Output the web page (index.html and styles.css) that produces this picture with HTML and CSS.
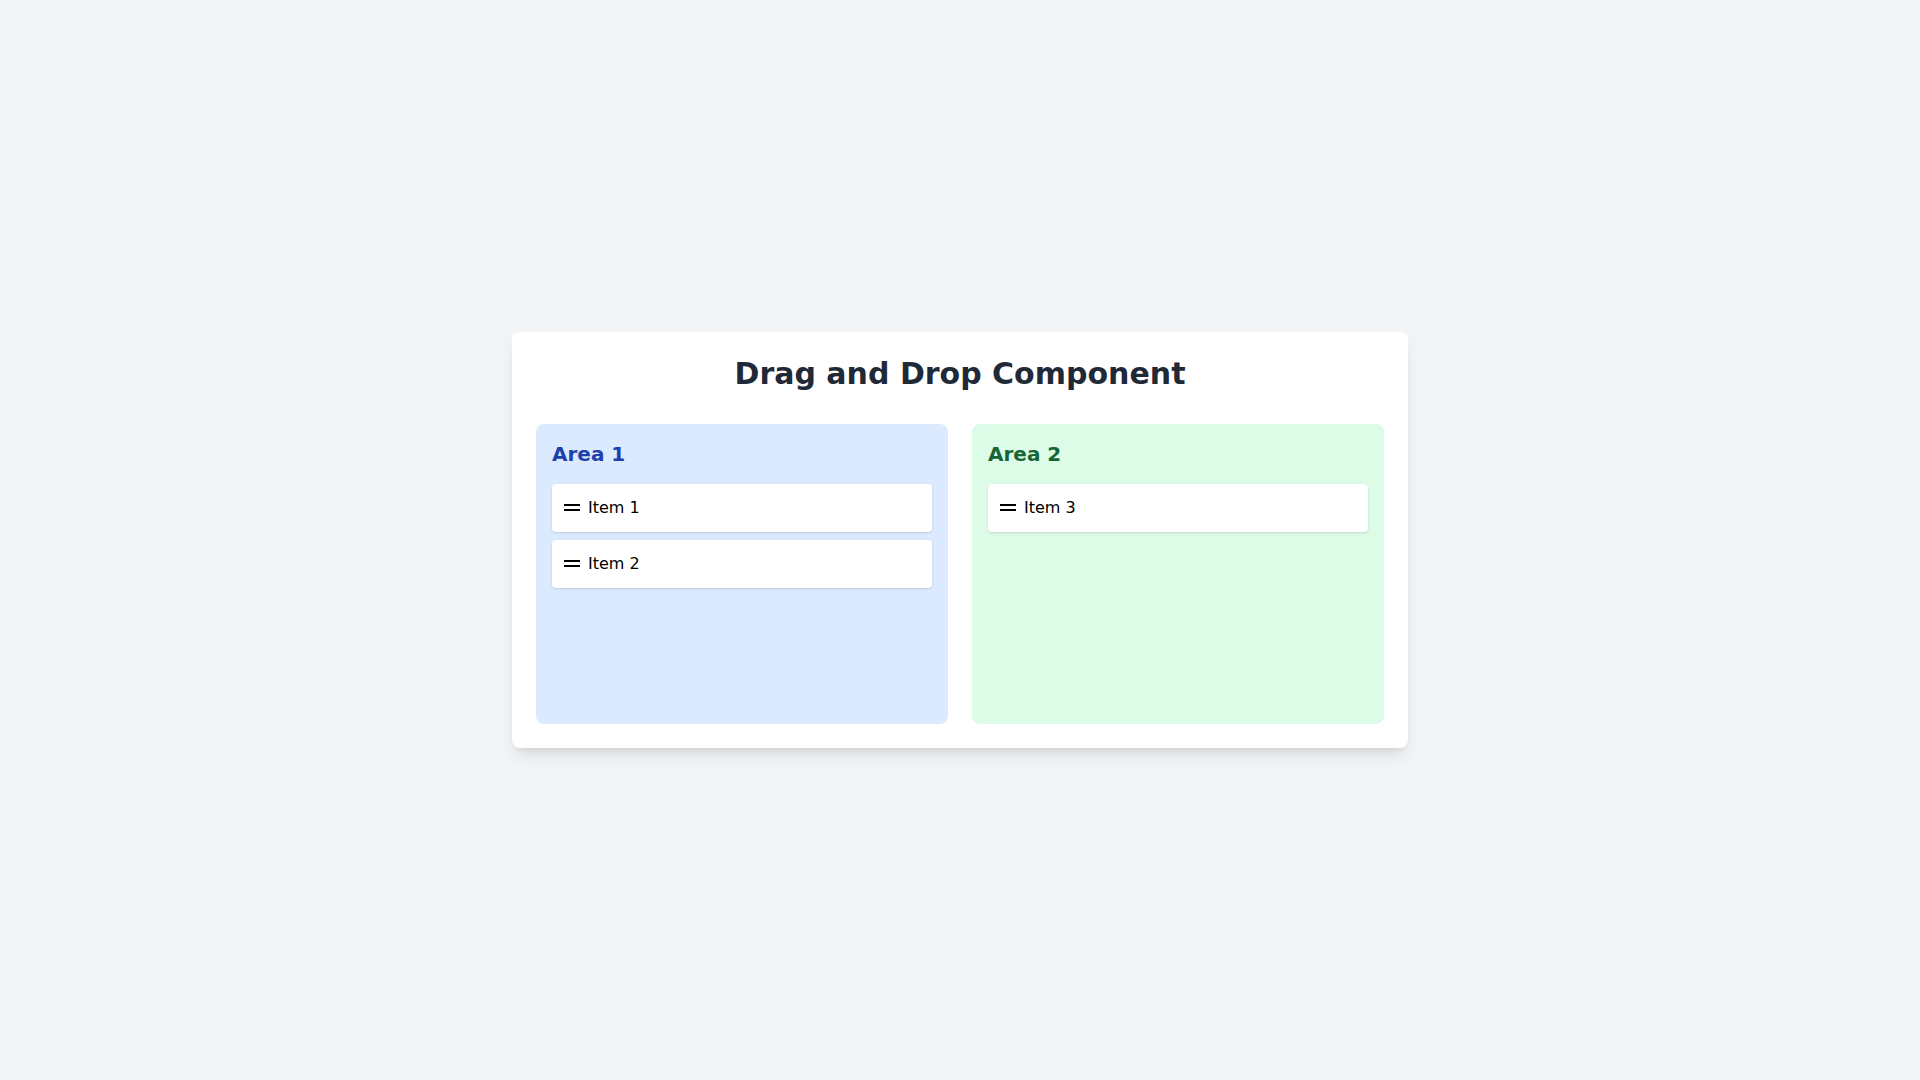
FILE: index.html
```html
<!DOCTYPE html>
<html lang="en">
<head>
<meta charset="utf-8">
<title>Drag and Drop Component</title>
<link rel="stylesheet" href="styles.css">
</head>
<body>
<main class="page">
  <section class="card">
    <h1 class="title">Drag and Drop Component</h1>
    <div class="areas">
      <div class="area area-blue">
        <h2 class="area-title">Area 1</h2>
        <ul class="items">
          <li class="item"><svg class="handle" width="16" height="8" viewBox="0 0 16 8"><rect x="0" y="0" width="16" height="2" fill="#000"/><rect x="0" y="5" width="16" height="2" fill="#000"/></svg><span>Item 1</span></li>
          <li class="item"><svg class="handle" width="16" height="8" viewBox="0 0 16 8"><rect x="0" y="0" width="16" height="2" fill="#000"/><rect x="0" y="5" width="16" height="2" fill="#000"/></svg><span>Item 2</span></li>
        </ul>
      </div>
      <div class="area area-green">
        <h2 class="area-title">Area 2</h2>
        <ul class="items">
          <li class="item"><svg class="handle" width="16" height="8" viewBox="0 0 16 8"><rect x="0" y="0" width="16" height="2" fill="#000"/><rect x="0" y="5" width="16" height="2" fill="#000"/></svg><span>Item 3</span></li>
        </ul>
      </div>
    </div>
  </section>
</main>
</body>
</html>
```
FILE: styles.css
```css
* { box-sizing: border-box; }
html, body {
  margin: 0;
  padding: 0;
  background: #f3f4f6;
  font-family: "DejaVu Sans", sans-serif;
}
.page {
  min-height: 100vh;
  display: flex;
  align-items: center;
  justify-content: center;
}
.card {
  width: 896px;
  background: #fff;
  border-radius: 8px;
  padding: 24px;
  box-shadow: 0 10px 15px -3px rgba(0,0,0,0.1), 0 4px 6px -4px rgba(0,0,0,0.1);
}
.title {
  margin: 0 0 32px;
  text-align: center;
  font-size: 30px;
  line-height: 36px;
  font-weight: 700;
  color: #1f2937;
}
.areas {
  display: grid;
  grid-template-columns: 1fr 1fr;
  gap: 24px;
}
.area {
  min-height: 300px;
  border-radius: 8px;
  padding: 16px;
}
.area-blue { background: #dbeafe; }
.area-green { background: #dcfce7; }
.area-title {
  margin: 0 0 16px;
  font-size: 20px;
  line-height: 28px;
  font-weight: 700;
}
.area-blue .area-title { color: #1e40af; }
.area-green .area-title { color: #166534; }
.items {
  list-style: none;
  margin: 0;
  padding: 0;
  display: flex;
  flex-direction: column;
  gap: 8px;
}
.item {
  display: flex;
  align-items: center;
  background: #fff;
  border-radius: 4px;
  padding: 12px;
  font-size: 16px;
  line-height: 24px;
  color: #000;
  box-shadow: 0 1px 3px 0 rgba(0,0,0,0.1), 0 1px 2px -1px rgba(0,0,0,0.1);
}
.handle {
  display: block;
  margin-right: 8px;
  flex: none;
}
```
